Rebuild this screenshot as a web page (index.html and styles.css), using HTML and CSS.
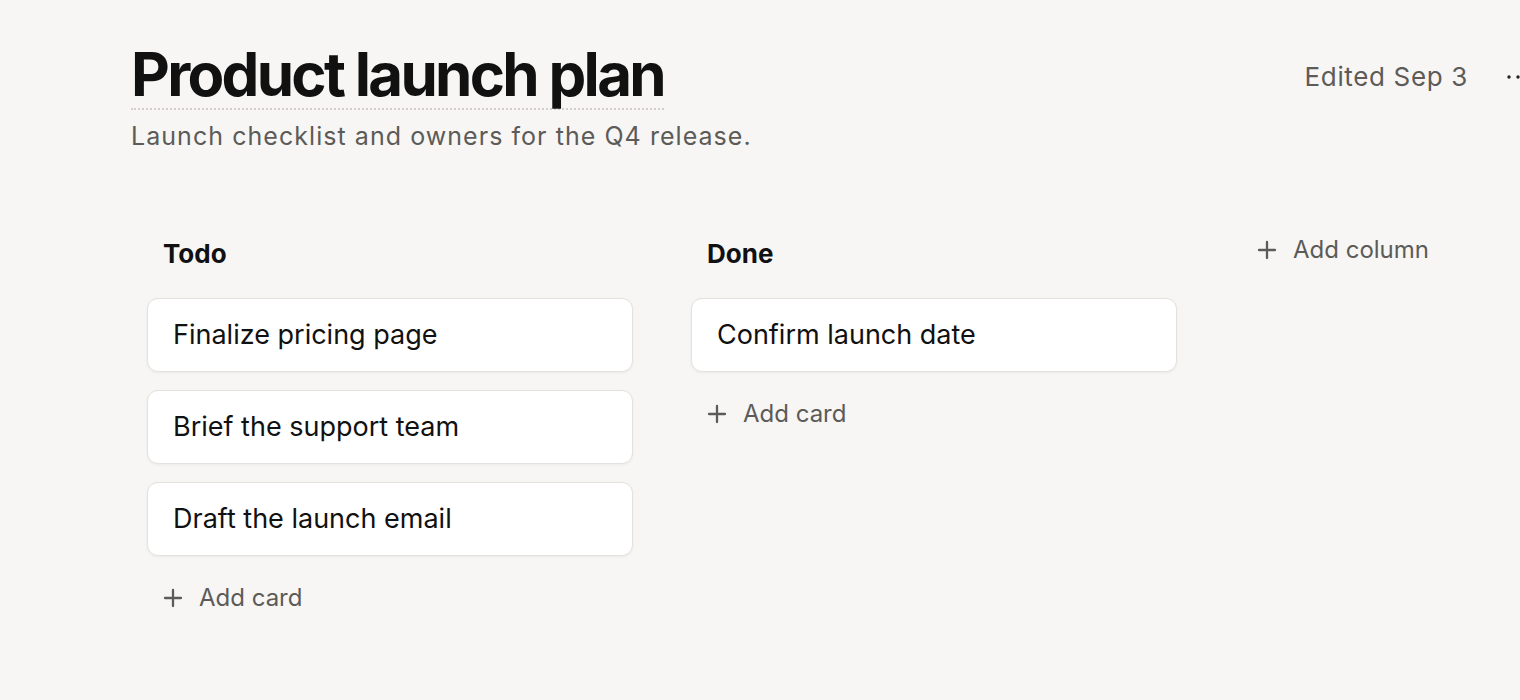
FILE: index.html
```html
<!DOCTYPE html>
<html lang="en">
<head>
<meta charset="utf-8">
<title>Product launch plan</title>
<link rel="stylesheet" href="styles.css">
</head>
<body>
<div class="page">
  <header class="header">
    <div class="title-block">
      <h1 class="title">Product launch plan</h1>
      <p class="subtitle">Launch checklist and owners for the Q4 release.</p>
    </div>
    <div class="meta">
      <span class="edited">Edited Sep 3</span>
      <button class="more" aria-label="More">
        <svg viewBox="0 0 24 6" width="24" height="6"><circle cx="2" cy="3" r="1.7" fill="currentColor"/><circle cx="11" cy="3" r="1.7" fill="currentColor"/><circle cx="20" cy="3" r="1.7" fill="currentColor"/></svg>
      </button>
    </div>
  </header>

  <main class="board">
    <section class="column">
      <h2 class="column-title">Todo</h2>
      <div class="cards">
        <div class="card">Finalize pricing page</div>
        <div class="card">Brief the support team</div>
        <div class="card">Draft the launch email</div>
      </div>
      <button class="add-btn">
        <svg class="plus" viewBox="0 0 20 20" width="20" height="20"><path d="M10 2v16M2 10h16" stroke="currentColor" stroke-width="2.3" stroke-linecap="round" fill="none"/></svg>
        <span>Add card</span>
      </button>
    </section>

    <section class="column">
      <h2 class="column-title">Done</h2>
      <div class="cards">
        <div class="card">Confirm launch date</div>
      </div>
      <button class="add-btn">
        <svg class="plus" viewBox="0 0 20 20" width="20" height="20"><path d="M10 2v16M2 10h16" stroke="currentColor" stroke-width="2.3" stroke-linecap="round" fill="none"/></svg>
        <span>Add card</span>
      </button>
    </section>

    <button class="add-btn add-column">
      <svg class="plus" viewBox="0 0 20 20" width="20" height="20"><path d="M10 2v16M2 10h16" stroke="currentColor" stroke-width="2.3" stroke-linecap="round" fill="none"/></svg>
      <span>Add column</span>
    </button>
  </main>
</div>
</body>
</html>
```

FILE: styles.css
```css
html, body {
  margin: 0;
  padding: 0;
  overflow: hidden;
}

body {
  background: #f7f6f4;
  font-family: Inter, "Noto Sans", sans-serif;
  color: #111;
}

.page {
  padding: 41px 0 0 131px;
  width: 1400px;
}

.header {
  display: flex;
  justify-content: space-between;
  align-items: flex-start;
}

.title {
  display: inline-block;
  margin: 0;
  font-size: 60px;
  font-weight: 700;
  letter-spacing: -0.045em;
  line-height: 67px;
  color: #111;
  border-bottom: 2px dotted #d2cfca;
}

.subtitle {
  margin: 10px 0 0;
  font-size: 25px;
  letter-spacing: 0.042em;
  line-height: 32px;
  color: #5c5b58;
}

.meta {
  display: flex;
  align-items: center;
  gap: 39px;
  margin-top: 20px;
}

.edited {
  font-size: 26px;
  letter-spacing: 0.025em;
  line-height: 32px;
  color: #5c5b58;
}

.more {
  display: flex;
  background: none;
  border: 0;
  padding: 0;
  color: #222;
  cursor: pointer;
}

.board {
  display: flex;
  align-items: flex-start;
  gap: 58px;
  margin-top: 86px;
  padding-left: 16px;
}

.column {
  width: 486px;
  display: flex;
  flex-direction: column;
}

.column-title {
  margin: 0 0 28px;
  padding-left: 16px;
  font-size: 26px;
  font-weight: 700;
  line-height: 32px;
  color: #111;
}

.cards {
  display: flex;
  flex-direction: column;
  gap: 18px;
}

.card {
  background: #fff;
  border: 1px solid #e4e2de;
  border-radius: 11px;
  box-shadow: 0 1px 3px rgba(0, 0, 0, 0.05);
  padding: 20px 25px;
  font-size: 27px;
  line-height: 32px;
  color: #111;
}

.add-btn {
  display: flex;
  align-items: center;
  gap: 16px;
  margin-top: 20px;
  padding: 8px 16px;
  background: none;
  border: 0;
  font-family: inherit;
  font-size: 24px;
  line-height: 28px;
  color: #5c5b58;
  cursor: pointer;
  align-self: flex-start;
}

.plus {
  color: #5c5b58;
}

.add-column {
  margin-top: -10px;
  margin-left: 6px;
}
```
